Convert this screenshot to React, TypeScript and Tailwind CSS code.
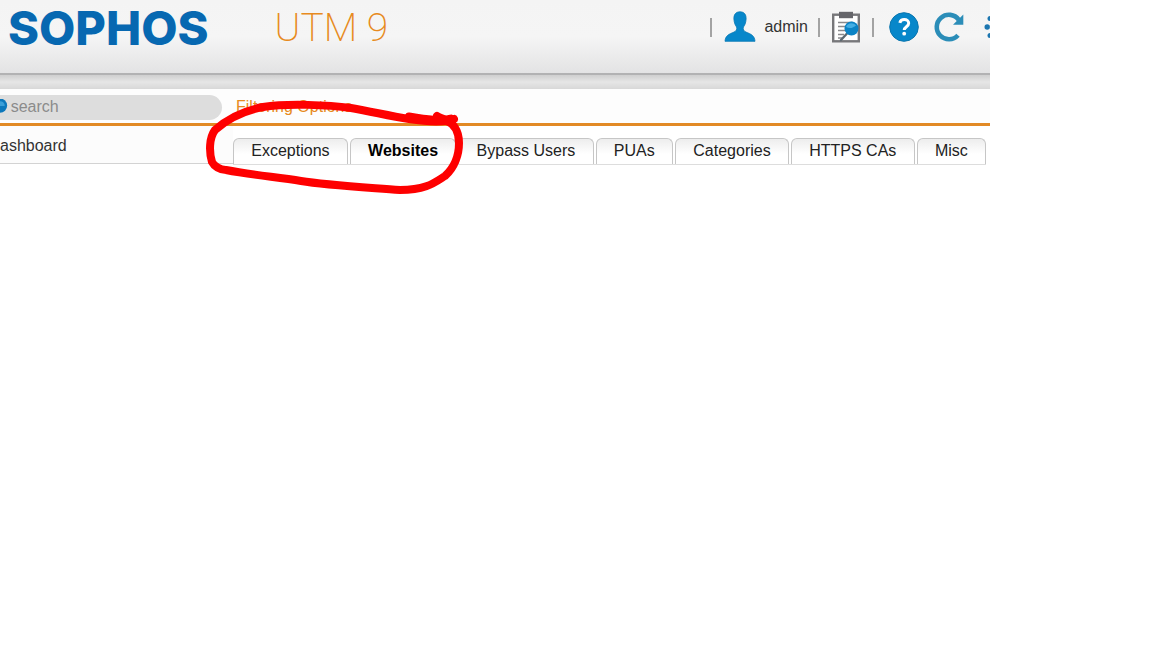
import { useState } from "react";
import { clsx } from "clsx";

const tabs = ["Exceptions", "Websites", "Bypass Users", "PUAs", "Categories", "HTTPS CAs", "Misc"];

const Divider = () => <span className="h-[19px] w-0.5 shrink-0 bg-[#a3a3a3]" />;

const UserIcon = () => (
  <svg width="32" height="32" viewBox="0 0 32 32" aria-hidden="true">
    <path
      d="M16 .8c4.400 0 6.300 3 6.100 7.200-.2 4-1.500 6.500-2.700 8-.6 2.400.2 4 2.600 5.100 4.800 2 8.600 3.300 9 9.200H1c.4-5.900 4.200-7.200 9-9.200 2.400-1.100 3.200-2.700 2.600-5.100-1.200-1.500-2.500-4-2.700-8C9.700 3.800 11.600.8 16 .8Z"
      fill="#0787ca"
      stroke="#0878b4"
      strokeWidth=".8"
    />
  </svg>
);

const ReportIcon = () => (
  <svg width="28" height="32" viewBox="0 0 28 32" aria-hidden="true">
    <rect x="1.200" y="3.700" width="25.600" height="26.600" fill="#fff" stroke="#77777a" strokeWidth="2.400" />
    <path d="M7 .8h14v6.400H7z" fill="#65656a" />
    <path d="M6 11.500h15M6 15.500h9M6 19.500h8M6 23.500h6M6 27h4" stroke="#8a8a8d" strokeWidth="1.500" />
    <path d="M15 22.500 9 29" stroke="#5c6870" strokeWidth="2.400" strokeLinecap="round" />
    <circle cx="19.500" cy="17.500" r="7" fill="#0b83c5" />
    <path d="M14 16c1.500-4 7-5 10-1.500-3 2.500-6 3.500-10 1.500Z" fill="#43aee4" />
  </svg>
);

const HelpIcon = () => (
  <svg width="32" height="32" viewBox="0 0 32 32" aria-hidden="true">
    <circle cx="16" cy="16" r="14.300" fill="#0787ca" stroke="#0b76ae" />
    <path
      d="M11.800 11.800c.6-2.300 2.300-3.300 4.400-3.300 2.700 0 4.500 1.600 4.500 3.800 0 3.400-4.500 3.500-4.500 6.800"
      fill="none"
      stroke="#fff"
      strokeWidth="3"
    />
    <circle cx="16.200" cy="22.700" r="1.900" fill="#fff" />
  </svg>
);

const RefreshIcon = () => (
  <svg width="30" height="32" viewBox="0 0 30 32" aria-hidden="true">
    <path d="M24 24.200A12.200 12.200 0 1 1 24.800 8.800" fill="none" stroke="#2b8db8" strokeWidth="4.600" />
    <path d="M29.300 3.500v10.300H19Z" fill="#2b8db8" />
  </svg>
);

// Only the left edge of the spinner fits in the bar
const SpinnerIcon = () => (
  <svg width="6" height="32" viewBox="0 0 6 32" aria-hidden="true">
    <circle cx="3.200" cy="16" r="2.700" fill="#1c76b0" />
    <circle cx="6" cy="7.500" r="2.500" fill="#1c76b0" />
    <circle cx="6" cy="24.500" r="2.500" fill="#1c76b0" />
  </svg>
);

const Marker = () => (
  <svg
    className="pointer-events-none absolute left-[200px] top-[95px]"
    width="270"
    height="105"
    viewBox="200 95 270 105"
    fill="none"
    aria-hidden="true"
  >
    <path
      d="M451 118.500c-10 3-24 1-42-2M454 119c-8 3-25 3-45 0-20-3-35-7-58-11-22-3-63-5-88-1-21 4-38 14-48 23-6 8-6 22-3 32 2 4 8 8 14 8 26 5 50 7 75 11 24 4 60 6 99 9 26 0 34-7 45-14 10-9 14-22 14-33 0-14-7-20-12-22-4-4-6-2-10-5"
      stroke="#fe0000"
      strokeWidth="8"
      strokeLinecap="round"
      strokeLinejoin="round"
    />
  </svg>
);

export default function App() {
  const [active, setActive] = useState("Websites");

  return (
    <div className="min-h-screen bg-white font-['Liberation_Sans',Arial,sans-serif] text-base text-[#333]">
      <div className="relative w-full max-w-[990px] overflow-hidden">
        <header className="flex h-[75px] items-start justify-between border-b-2 border-[#b2b2b3] bg-linear-to-b from-[#f4f4f4] via-[#f5f5f5] to-[#e3e3e4]">
          <div className="flex items-center gap-[66px] pl-2">
            <span className="font-['Inter',sans-serif] text-[47px] leading-14 font-extrabold text-[#0768b1]">SOPHOS</span>
            <span className="font-['Roboto',sans-serif] text-[39px] leading-14 font-extralight text-[#e78a20]">UTM 9</span>
          </div>
          <div className="flex h-[54px] items-center">
            <Divider />
            <button className="ml-3 flex items-center gap-2">
              <UserIcon />
              admin
            </button>
            <span className="ml-2.5 flex items-center gap-3">
              <Divider />
              <button aria-label="Reports"><ReportIcon /></button>
              <Divider />
            </span>
            <button className="ml-3.5" aria-label="Help"><HelpIcon /></button>
            <button className="ml-3.5" aria-label="Reload"><RefreshIcon /></button>
            <button className="ml-5" aria-label="Loading"><SpinnerIcon /></button>
          </div>
        </header>
        <div className="h-[14px] bg-linear-to-b from-[#cfcfcf] via-[#e6e6e6] to-[#d8d8d8]" />

        <div className="flex h-[37px] items-center border-b-3 border-[#e28a25] bg-[#fdfdfd] pt-0.5">
          <label className="flex h-[25px] w-[222px] items-center overflow-hidden rounded-r-full bg-[#dddddd]">
            <svg width="8" height="16" viewBox="0 0 8 16" aria-hidden="true">
              <circle cx="0" cy="6.500" r="7.500" fill="#0d78bb" />
              <path d="M0 2c3 0 5 2 5 5H0Z" fill="#3b9fd8" />
            </svg>
            <input
              type="text"
              aria-label="Search"
              placeholder="search"
              className="ml-[3px] w-full bg-transparent outline-none placeholder:text-[#8b8b8b]"
            />
          </label>
          <h1 className="pl-3.5 leading-5 text-[#e78a20]">Filtering Options</h1>
        </div>

        <div className="flex items-start">
          <nav className="h-[38px] w-[233px] shrink-0 border-b border-[#d3d3d3] bg-[#fcfcfc]">
            <a href="#dashboard" className="block leading-10">ashboard</a>
          </nav>
          <div role="tablist" className="mt-3 mr-1 flex grow gap-0.5 border-b border-[#dddddd]">
            {tabs.map((tab) => (
              <button
                key={tab}
                role="tab"
                aria-selected={active === tab}
                onClick={() => setActive(tab)}
                className={clsx(
                  "h-[26px] grow rounded-t-md border border-b-0 border-[#c6c6c6] bg-linear-to-b from-[#ededed] to-white to-60% px-4 pb-0.5 leading-6 whitespace-nowrap",
                  active === tab ? "font-bold text-black" : "text-[#222]"
                )}
              >
                {tab}
              </button>
            ))}
          </div>
        </div>
        <div className="h-9" />
        <Marker />
      </div>
    </div>
  );
}
